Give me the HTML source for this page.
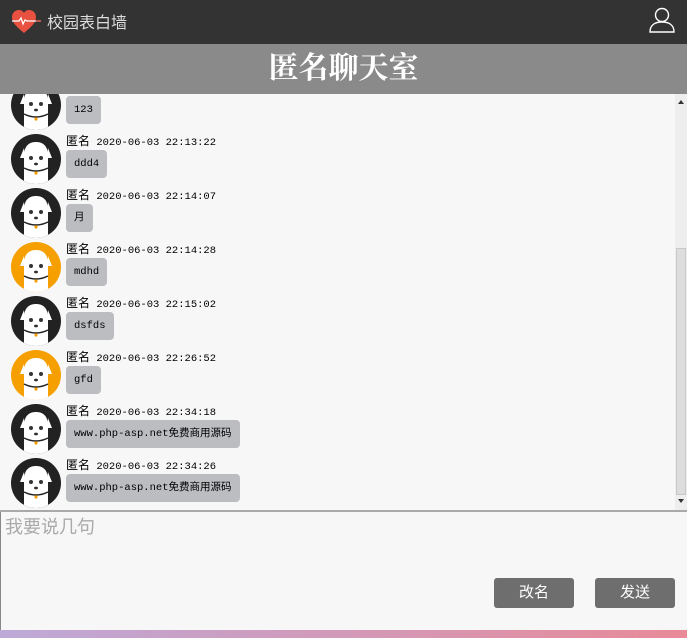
<!DOCTYPE html>
<html><head><meta charset="utf-8"><style>
*{margin:0;padding:0;box-sizing:border-box}
body{width:687px;height:638px;overflow:hidden;background:#f7f7f7;font-family:"Liberation Sans","Noto Sans CJK SC",sans-serif;position:relative}
.hd{position:absolute;left:0;top:0;width:687px;height:44px;background:#333}
.hd .t{position:absolute;left:47px;top:9px;color:#ddd;font-size:16px}
.tb{position:absolute;left:0;top:44px;width:687px;height:50px;background:#8a8a8a;text-align:center;color:#fff;font:bold 30px/50px "Liberation Serif","Noto Serif CJK SC",serif;z-index:2}
.chat{position:absolute;left:0;top:94px;width:675px;height:416px;overflow:hidden;background:#f7f7f7}
.row{position:absolute;left:0;height:54px;width:600px}
.av{position:absolute;left:11px;top:0;width:50px;height:50px}
.nm{position:absolute;left:66px;top:0;font:10.5px/14px "Liberation Mono","Noto Sans CJK SC",monospace;color:#000}
.nm b{font:normal 12px/14px "Liberation Sans","Noto Sans CJK SC",sans-serif}
.bb{position:absolute;left:66px;top:16px;height:28px;background:#bcbdc1;border-radius:4px;padding:0 8px;font:10.5px/28px "Liberation Mono","Noto Sans CJK SC",monospace;color:#000}
.sb{position:absolute;left:675px;top:94px;width:12px;height:416px;background:#eee}
.th{position:absolute;left:676px;top:248px;width:10px;height:247px;background:#ddd;border:1px solid #c8c8c8}
.line{position:absolute;left:0;top:510px;width:687px;height:2px;background:#aaa}
.inp{position:absolute;left:0;top:512px;width:687px;height:118px;border-left:1px solid #888;background:#f7f7f7}
.ph{position:absolute;left:4px;top:1px;color:#aaa;font-size:18px}
.btn{position:absolute;top:66px;width:80px;height:30px;background:#6e6e6e;color:#fff;border-radius:3px;text-align:center;font-size:15px;line-height:30px}
.grad{position:absolute;left:0;top:630px;width:687px;height:8px;background:linear-gradient(90deg,#bda9d8,#e88a98)}
</style></head><body>
<div class="hd">
<svg style="position:absolute;left:10px;top:9px" width="32" height="25" viewBox="0 0 32 25"><path d="M14 24 C7 18 2 14 2 8 C2 4 5 1 9 1 C11 1 13 2 14 4 C15 2 17 1 19 1 C23 1 26 4 26 8 C26 14 21 18 14 24Z" fill="#e8503f"/><path d="M2 12 H9 L11 9 L13 15 L15 11 L17 12 H31" stroke="#fff" stroke-width="1.3" fill="none"/><path d="M26 12 H31" stroke="#e8503f" stroke-width="1.3"/></svg>
<div class="t">校园表白墙</div>
<svg style="position:absolute;left:648px;top:6px" width="28" height="28" viewBox="0 0 28 28" fill="none" stroke="#fff" stroke-width="1.4"><circle cx="14" cy="9" r="6.5"/><path d="M2 26 C2 19 7 16 14 16 C21 16 26 19 26 26 Z"/></svg>
</div>
<div class="tb">匿名聊天室</div>
<div class="chat">
<svg width="0" height="0" style="position:absolute"><defs>
<g id="dog"><path d="M13 50 L13 22 C13 12 18 8 25 8 C32 8 37 12 37 22 L37 50Z" fill="#fff"/><path d="M13 14 L9 24 L14 24Z M37 14 L41 24 L36 24Z" fill="#fff"/><circle cx="20" cy="24" r="2" fill="#333"/><circle cx="30" cy="24" r="2" fill="#333"/><ellipse cx="25" cy="30" rx="2" ry="1.4" fill="#333"/><path d="M13 34 Q25 40 37 34" stroke="#222" stroke-width="1.5" fill="none"/><circle cx="25" cy="39" r="1.6" fill="#f5a000"/></g>
</defs></svg>
</div>
<div class="sb"><div style="position:absolute;left:3px;top:6px;border:3px solid transparent;border-bottom:4px solid #333;border-top:0"></div><div style="position:absolute;left:3px;top:405px;border:3px solid transparent;border-top:4px solid #333;border-bottom:0"></div></div>
<div class="th"></div>
<div class="line"></div>
<div class="inp"><div class="ph">我要说几句</div><div class="btn" style="left:493px">改名</div><div class="btn" style="left:594px">发送</div></div>
<div class="grad"></div>
<script>
var d=[[-14,"","","123",0],[40,"2020-06-03 22:13:22","","ddd4",0],[94,"2020-06-03 22:14:07","","月",0],[148,"2020-06-03 22:14:28","","mdhd",1],[202,"2020-06-03 22:15:02","","dsfds",0],[256,"2020-06-03 22:26:52","","gfd",1],[310,"2020-06-03 22:34:18","","www.php-asp.net免费商用源码",0],[364,"2020-06-03 22:34:26","","www.php-asp.net免费商用源码",0]];
var c=document.querySelector('.chat'),h='';
d.forEach(function(r){h+='<div class="row" style="top:'+r[0]+'px"><svg class="av" viewBox="0 0 50 50"><clipPath id="c'+r[0]+'"><circle cx="25" cy="25" r="25"/></clipPath><g clip-path="url(#c'+r[0]+')"><rect width="50" height="50" fill="'+(r[4]?'#f59f00':'#222')+'"/><use href="#dog"/></g></svg><div class="nm"><b>匿名</b> '+r[1]+'</div><div class="bb">'+r[3]+'</div></div>';});
c.insertAdjacentHTML('beforeend',h);
</script>
</body></html>
